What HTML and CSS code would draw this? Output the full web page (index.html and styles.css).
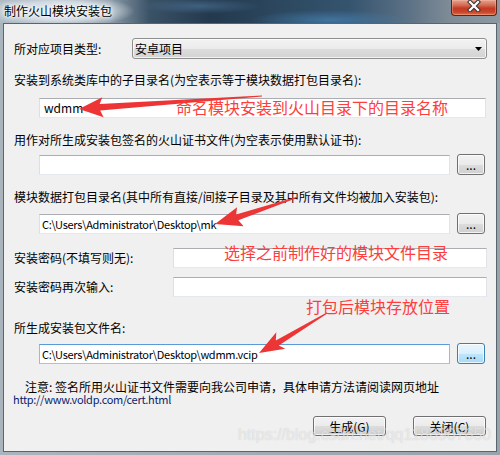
FILE: index.html
```html
<!DOCTYPE html>
<html lang="zh-CN">
<head>
<meta charset="utf-8">
<title>制作火山模块安装包</title>
<link rel="stylesheet" href="styles.css">
</head>
<body>
<div class="window">
  <div class="titlebar">
    <span class="title">制作火山模块安装包</span>
    <div class="close">
      <svg width="14" height="12" viewBox="0 0 14 12">
        <path d="M3 2 L11 10 M11 2 L3 10" stroke="#3a3a3a" stroke-width="4.4" stroke-linecap="square" fill="none"/>
        <path d="M3 2 L11 10 M11 2 L3 10" stroke="#ffffff" stroke-width="2.2" stroke-linecap="square" fill="none"/>
      </svg>
    </div>
  </div>
  <div class="client">
    <div class="row-type">
      <span class="lbl">所对应项目类型:</span>
      <div class="combo"><span>安卓项目</span><svg class="caret" width="7" height="4" viewBox="0 0 7 4"><path d="M0 0 H7 L3.5 4 Z" fill="#000"/></svg></div>
    </div>
    <div class="lbl block m-l2">安装到系统类库中的子目录名(为空表示等于模块数据打包目录名):</div>
    <div class="input wide m-i1">wdmm</div>
    <div class="lbl block m-l3">用作对所生成安装包签名的火山证书文件(为空表示使用默认证书):</div>
    <div class="field m-f2"><div class="input path"></div><button class="btn dots">...</button></div>
    <div class="lbl block m-l4">模块数据打包目录名(其中所有直接/间接子目录及其中所有文件均被加入安装包):</div>
    <div class="field m-f3"><div class="input path">C:\Users\Administrator\Desktop\mk</div><button class="btn dots">...</button></div>
    <div class="pw m-p1"><span class="lbl">安装密码(不填写则无):</span><div class="input pwi"></div></div>
    <div class="pw m-p2"><span class="lbl">安装密码再次输入:</span><div class="input pwi"></div></div>
    <div class="lbl block m-l5">所生成安装包文件名:</div>
    <div class="field m-f4"><div class="input path focus">C:\Users\Administrator\Desktop\wdmm.vcip</div><button class="btn dots hot">...</button></div>
    <div class="note">
      <div class="note-text">注意: 签名所用火山证书文件需要向我公司申请，具体申请方法请阅读网页地址</div>
      <div class="url">http://www.voldp.com/cert.html</div>
    </div>
    <div class="actions">
      <button class="btn act">生成(G)</button>
      <button class="btn act">关闭(C)</button>
    </div>
  </div>

  <svg class="arrows" width="500" height="455" viewBox="0 0 500 455">
    <polygon fill="#ee3535" points="262,95.5 99.7,104.1 102.3,97.3 79,109 103.6,117.3 100.2,110.6 262,96.5"/>
    <polygon fill="#ee3535" points="297.8,196.5 236.1,214.6 237.1,207.2 215,224 243.6,226.3 238.4,220.3 298.2,197.5"/>
    <polygon fill="#ee3535" points="326.7,312.6 275.8,340.4 276.3,332.2 259,353 285.3,348.8 278.8,345.6 327.3,313.4"/>
  </svg>
  <div class="ann ann1">命名模块安装到火山目录下的目录名称</div>
  <div class="ann ann2">选择之前制作好的模块文件目录</div>
  <div class="ann ann3">打包后模块存放位置</div>
  <div class="watermark">https://blog.csdn.net/qq1186907650</div>
</div>
</body>
</html>
```

FILE: styles.css
```css
html, body {
  margin: 0;
  padding: 0;
}
body {
  width: 500px;
  height: 455px;
  overflow: hidden;
  font-family: "Noto Sans CJK SC", "Liberation Sans", sans-serif;
  font-size: 12px;
  color: #000;
}
.window {
  position: relative;
  width: 500px;
  height: 455px;
  box-sizing: border-box;
  padding: 0 3px 3px 3px;
  display: flex;
  flex-direction: column;
  background: linear-gradient(90deg, #aab4bd 0, #97a3ad 100%);
}
.titlebar {
  height: 23px;
  margin: 0 -3px;
  display: flex;
  justify-content: space-between;
  align-items: flex-start;
  background:
    radial-gradient(ellipse 75px 16px at 60px 11px, rgba(235,240,245,0.95) 0, rgba(220,228,235,0.8) 60%, rgba(200,210,220,0) 100%),
    radial-gradient(ellipse 80px 10px at 330px 20px, rgba(70,130,180,0.7) 0, rgba(70,130,180,0) 100%),
    radial-gradient(ellipse 60px 8px at 200px 6px, rgba(80,120,160,0.6) 0, rgba(80,120,160,0) 100%),
    linear-gradient(90deg, #aebac4 0, #8c9ba8 110px, #3a5266 150px, #23394d 210px, #2c4860 280px, #35546e 350px, #5d7286 410px, #7f8c97 450px, #8d98a2 500px);
}
.title {
  padding-left: 4px;
  line-height: 22px;
  font-size: 12px;
  color: #000;
  text-shadow: 0 0 5px #fff, 0 0 3px #fff, 0 0 8px rgba(255,255,255,0.8);
}
.close {
  width: 46px;
  height: 16px;
  margin-right: 3px;
  box-sizing: border-box;
  border: 1px solid #5c2419;
  border-top: none;
  border-radius: 0 0 4px 4px;
  background: linear-gradient(#e7a38f 0, #d36b52 35%, #c23b22 55%, #c8442a 80%, #e0704a 100%);
  box-shadow: inset 0 0 0 1px rgba(255,200,180,0.35);
  display: flex;
  justify-content: center;
  align-items: flex-start;
}
.close svg {
  display: block;
}
.client {
  flex: 1;
  position: relative;
  background: #f0f0f0;
  border: 1px solid #5a646d;
  padding: 0 9px 0 10px;
  display: flex;
  flex-direction: column;
  align-items: stretch;
}
.lbl {
  line-height: 16px;
  white-space: nowrap;
}
.block {
  display: block;
}
.row-type {
  margin-top: 14px;
  height: 21px;
  display: flex;
  align-items: center;
}
.combo {
  margin-left: auto;
  width: 355px;
  height: 21px;
  box-sizing: border-box;
  border: 1px solid #8e8f8f;
  border-radius: 3px;
  background: linear-gradient(#f3f3f3 0, #ebebeb 50%, #dddddd 51%, #d3d3d3 100%);
  box-shadow: inset 0 0 0 1px rgba(255,255,255,0.7);
  display: flex;
  align-items: center;
  padding: 0 4px 0 2px;
  line-height: 18px;
}
.combo span {
  flex: 1;
}
.caret {
  display: block;
}
.input {
  box-sizing: border-box;
  height: 20px;
  background: #fff;
  border: 1px solid;
  border-color: #abadb3 #e2e3ea #e3e9ef #dbdfe6;
  padding: 0 3px 0 2px;
  line-height: 18px;
  font-size: 11px;
  letter-spacing: -0.3px;
  white-space: nowrap;
  overflow: hidden;
}
.input.wide {
  padding-left: 4px;
  font-size: 12px;
  letter-spacing: 0;
}
.input.focus {
  border-color: #5a9ad6 #8fbde6 #9cc6ea #8fbde6;
}
.wide {
  margin-left: 25px;
  width: 447px;
}
.field {
  margin-left: 25px;
  height: 21px;
  display: flex;
  align-items: center;
  gap: 7px;
}
.field .path {
  width: 411px;
}
.btn {
  box-sizing: border-box;
  border: 1px solid #707070;
  border-radius: 3px;
  background: linear-gradient(#f2f2f2 0, #ebebeb 50%, #dddddd 51%, #cfcfcf 100%);
  box-shadow: inset 0 0 0 1px rgba(255,255,255,0.75);
  font-family: "Noto Sans CJK SC", "Liberation Sans", sans-serif;
  font-size: 12px;
  color: #000;
  padding: 0;
  margin: 0;
}
.dots {
  width: 28px;
  height: 21px;
  line-height: 17px;
}
.btn.hot {
  border-color: #3c7fb1;
  background: linear-gradient(#eaf6fd 0, #d9f0fc 50%, #bee6fd 51%, #a7d9f5 100%);
}
.pw {
  height: 20px;
  display: flex;
  align-items: center;
}
.pwi {
  margin-left: auto;
  width: 314px;
}
.m-l2 { margin-top: 13px; }
.m-i1 { margin-top: 10px; }
.m-l3 { margin-top: 14px; }
.m-f2 { margin-top: 6px; }
.m-l4 { margin-top: 14px; }
.m-f3 { margin-top: 8px; }
.m-p1 { margin-top: 14px; }
.m-p2 { margin-top: 9px; }
.m-l5 { margin-top: 23px; }
.m-f4 { margin-top: 7px; }
.note {
  margin-top: 16px;
  line-height: 13px;
}
.note-text {
  padding-left: 11px;
  white-space: nowrap;
}
.url {
  color: #0a1e6e;
  margin-left: -1px;
  font-size: 11px;
  letter-spacing: -0.3px;
}
.actions {
  margin-top: 10px;
  display: flex;
  justify-content: flex-end;
  gap: 27px;
  padding-right: 1px;
}
.act {
  width: 73px;
  height: 20px;
  line-height: 17px;
}
.arrows {
  position: absolute;
  left: 0;
  top: 0;
  pointer-events: none;
}
.ann {
  position: absolute;
  font-size: 16px;
  line-height: 16px;
  color: #ff3d3d;
  white-space: nowrap;
}
.ann1 { left: 176px; top: 99px; }
.ann2 { left: 224px; top: 244px; }
.ann3 { left: 306px; top: 298px; }
.watermark {
  position: absolute;
  left: 238px;
  top: 425px;
  font-family: "Liberation Sans", sans-serif;
  font-size: 16px;
  line-height: 20px;
  color: rgba(255,255,255,0.55);
  text-shadow: 0 0 1px rgba(120,120,120,0.35);
  white-space: nowrap;
  pointer-events: none;
}
```
